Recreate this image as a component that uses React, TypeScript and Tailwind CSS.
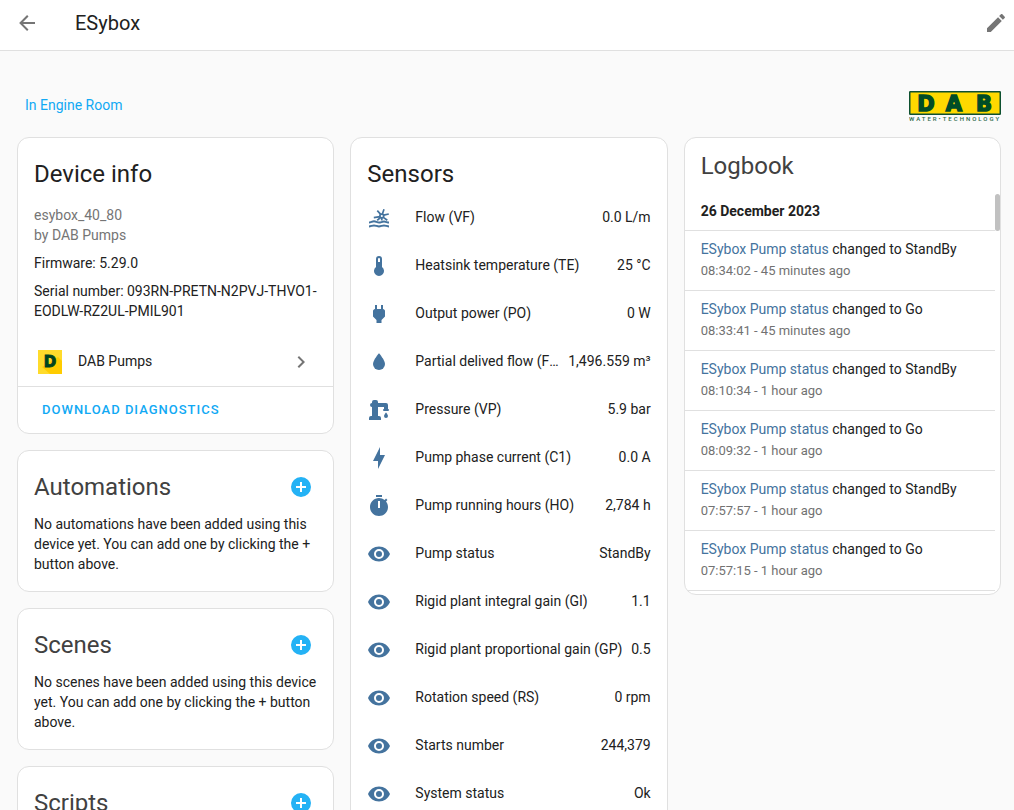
import React from 'react';

const icons = {
  back: 'M20,11V13H8L13.5,18.5L12.08,19.92L4.16,12L12.08,4.08L13.5,5.5L8,11H20Z',
  pencil:
    'M20.71,7.04C21.1,6.65 21.1,6 20.71,5.63L18.37,3.29C18,2.9 17.35,2.9 16.96,3.29L15.12,5.12L18.87,8.87M3,17.25V21H6.75L17.81,9.93L14.06,6.18L3,17.25Z',
  chevron: 'M8.59,16.58L13.17,12L8.59,7.41L10,6L16,12L10,18L8.59,16.58Z',
  plus: 'M17,13H13V17H11V13H7V11H11V7H13V11H17M12,2A10,10 0 0,0 2,12A10,10 0 0,0 12,22A10,10 0 0,0 22,12A10,10 0 0,0 12,2Z',
  thermometer: 'M15 13V5A3 3 0 0 0 9 5V13A5 5 0 1 0 15 13M12 4A1 1 0 0 1 13 5V8H11V5A1 1 0 0 1 12 4Z',
  plug: 'M16,7V3H14V7H10V3H8V7H8C7,7 6,8 6,9V14.5L9.5,18V21H14.5V18L18,14.5V9C18,8 17,7 16,7Z',
  water: 'M12,20A6,6 0 0,1 6,14C6,10 12,3.25 12,3.25C12,3.25 18,10 18,14A6,6 0 0,1 12,20Z',
  pump: 'M19,14.5C19,14.5 21,16.67 21,18A2,2 0 0,1 19,20A2,2 0 0,1 17,18C17,16.67 19,14.5 19,14.5M5,18V9A2,2 0 0,1 3,7A2,2 0 0,1 5,5V4A2,2 0 0,1 7,2H9A2,2 0 0,1 11,4V5H19A2,2 0 0,1 21,7V9L21,11A1,1 0 0,1 22,12A1,1 0 0,1 21,13H17A1,1 0 0,1 16,12A1,1 0 0,1 17,11V9H11V18H12A2,2 0 0,1 14,20V22H2V20A2,2 0 0,1 4,18H5Z',
  bolt: 'M11 15H6L13 1V9H18L11 23V15Z',
  timer:
    'M19.03 7.39L20.45 5.97C20 5.46 19.55 5 19.04 4.56L17.62 6C16.07 4.74 14.12 4 12 4C7.03 4 3 8.03 3 13C3 17.97 7.02 22 12 22C17 22 21 17.97 21 13C21 10.88 20.26 8.93 19.03 7.39M13 14H11V7H13V14M15 1H9V3H15V1Z',
  eye: 'M12,9A3,3 0 0,0 9,12A3,3 0 0,0 12,15A3,3 0 0,0 15,12A3,3 0 0,0 12,9M12,17A5,5 0 0,1 7,12A5,5 0 0,1 12,7A5,5 0 0,1 17,12A5,5 0 0,1 12,17M12,4.5C7,4.5 2.73,7.61 1,12C2.73,16.39 7,19.5 12,19.5C17,19.5 21.27,16.39 23,12C21.27,7.61 17,4.5 12,4.5Z',
};

type IconName = keyof typeof icons | 'hydro';

const sensors: { icon: IconName; name: string; value: string }[] = [
  { icon: 'hydro', name: 'Flow (VF)', value: '0.0 L/m' },
  { icon: 'thermometer', name: 'Heatsink temperature (TE)', value: '25 °C' },
  { icon: 'plug', name: 'Output power (PO)', value: '0 W' },
  { icon: 'water', name: 'Partial delived flow (FP)', value: '1,496.559 m³' },
  { icon: 'pump', name: 'Pressure (VP)', value: '5.9 bar' },
  { icon: 'bolt', name: 'Pump phase current (C1)', value: '0.0 A' },
  { icon: 'timer', name: 'Pump running hours (HO)', value: '2,784 h' },
  { icon: 'eye', name: 'Pump status', value: 'StandBy' },
  { icon: 'eye', name: 'Rigid plant integral gain (GI)', value: '1.1' },
  { icon: 'eye', name: 'Rigid plant proportional gain (GP)', value: '0.5' },
  { icon: 'eye', name: 'Rotation speed (RS)', value: '0 rpm' },
  { icon: 'eye', name: 'Starts number', value: '244,379' },
  { icon: 'eye', name: 'System status', value: 'Ok' },
];

const logbook = [
  { state: 'StandBy', time: '08:34:02 - 45 minutes ago' },
  { state: 'Go', time: '08:33:41 - 45 minutes ago' },
  { state: 'StandBy', time: '08:10:34 - 1 hour ago' },
  { state: 'Go', time: '08:09:32 - 1 hour ago' },
  { state: 'StandBy', time: '07:57:57 - 1 hour ago' },
  { state: 'Go', time: '07:57:15 - 1 hour ago' },
];

function Icon({ name, className = '' }: { name: IconName; className?: string }) {
  if (name === 'hydro') return <HydroIcon className={className} />;
  return (
    <svg viewBox="0 0 24 24" className={`size-6 shrink-0 fill-current ${className}`} aria-hidden="true">
      <path d={icons[name]} />
    </svg>
  );
}

// Turbine wheel above two waves
function HydroIcon({ className = '' }: { className?: string }) {
  return (
    <svg viewBox="0 0 24 24" className={`size-6 shrink-0 fill-none stroke-current ${className}`} aria-hidden="true">
      <circle cx="14.8" cy="10" r="1.9" strokeWidth="1.7" />
      <path
        strokeWidth="1.7"
        d="M13.7 8.3L10.3 4.6M15.4 8L17 3.2M16.6 9.2L21.8 8M16.3 11.4L20.3 14.2M15 12L14.6 14.5M13 10.7L6.8 11.6M13.4 11.5L10.2 14.4"
      />
      <path
        strokeWidth="2"
        d="M2 16.6C3.7 16.6 5.3 15.2 7 15.2S10.3 16.6 12 16.6S15.3 15.6 17 15.6S20.3 16.6 22 16.6M2 20.4C3.7 20.4 5.3 19.4 7 19.4S10.3 20.4 12 20.4S15.3 19.4 17 19.4S20.3 20.4 22 20.4"
      />
    </svg>
  );
}

function BrandLogo() {
  return (
    <svg viewBox="0 0 92 31" className="h-[31px] w-[92px]" role="img" aria-label="DAB Water Technology">
      <rect x="0.75" y="0.75" width="90.5" height="22.5" rx="0.5" fill="#ffd900" stroke="#0d5030" strokeWidth="1.5" />
      <g
        fontSize="21"
        fontWeight="700"
        fill="#004d27"
        stroke="#004d27"
        strokeWidth="1.5"
        textAnchor="middle"
        fontFamily="'DejaVu Sans', sans-serif"
      >
        <text x="17" y="20">
          D
        </text>
        <text x="45" y="20">
          A
        </text>
        <text x="75" y="20">
          B
        </text>
      </g>
      <text x="0" y="30" fontSize="6" fontWeight="500" fill="#2d6b4c" letterSpacing="2" fontFamily="Roboto, sans-serif">
        WATER•TECHNOLOGY
      </text>
    </svg>
  );
}

function BrandIcon() {
  return (
    <svg viewBox="0 0 24 24" className="size-6 shrink-0" aria-hidden="true">
      <path fill="#ffdb2b" d="M0 0H24V24H0Z" />
      <path fill="#ffcc00" d="M20 7L24 11V24H12L4 17Z" />
      <text
        x="12"
        y="17"
        fontSize="15"
        fontWeight="700"
        fill="#004320"
        stroke="#004320"
        textAnchor="middle"
        fontFamily="'DejaVu Sans', sans-serif"
      >
        D
      </text>
    </svg>
  );
}

function Card({ children, className = '' }: { children: React.ReactNode; className?: string }) {
  return (
    <section className={`overflow-hidden rounded-xl border border-[#e0e0e0] bg-white ${className}`}>{children}</section>
  );
}

function EmptyCard({ title, children }: { title: string; children: React.ReactNode }) {
  return (
    <Card className="px-4 pb-[17px]">
      <div className="flex h-[63px] items-center justify-between pt-2 pr-1">
        <h2 className="text-2xl text-[#414141]">{title}</h2>
        <button type="button" aria-label={`Add ${title}`} className="text-[#24b2f5]">
          <Icon name="plus" />
        </button>
      </div>
      <p className="leading-5">{children}</p>
    </Card>
  );
}

export default function App() {
  return (
    <div className="flex h-screen flex-col overflow-hidden bg-[#fafafa] font-[Roboto,sans-serif] text-sm text-[#212121]">
      <header className="flex h-[51px] shrink-0 items-center border-b border-[#e0e0e0] bg-white pr-1.5 pb-1 pl-[15px]">
        <button type="button" aria-label="Back" className="text-[#757575]">
          <Icon name="back" />
        </button>
        <h1 className="ml-9 flex-1 text-xl">ESybox</h1>
        <button type="button" aria-label="Edit" className="text-[#757575]">
          <Icon name="pencil" />
        </button>
      </header>

      <main className="flex-1 overflow-y-auto pr-[13px] pl-[17px] [scrollbar-width:none]">
        <div className="flex h-[86px] items-end justify-between pb-[15px] pl-2">
          <a href="#area" className="pb-[7px] leading-5 text-[#11a9f4]">
            In Engine Room
          </a>
          <BrandLogo />
        </div>

        <div className="grid grid-cols-3 items-start gap-4">
          <div className="flex flex-col gap-4">
            <Card>
              <div className="px-4 pt-5">
                <h2 className="mb-[15px] text-2xl">Device info</h2>
                <div className="flex flex-col gap-2 leading-5">
                  <p className="text-[#757575]">
                    esybox_40_80
                    <br />
                    by DAB Pumps
                  </p>
                  <p>Firmware: 5.29.0</p>
                  <p>Serial number: 093RN-PRETN-N2PVJ-THVO1-EODLW-RZ2UL-PMIL901</p>
                </div>
              </div>
              <a href="#integration" className="mt-[17px] flex h-12 items-center gap-4 px-5">
                <BrandIcon />
                <span className="flex-1 pb-0.5">DAB Pumps</span>
                <Icon name="chevron" className="text-[#757575]" />
              </a>
              <div className="border-t border-[#e0e0e0] px-6 pt-3 pb-[13px]">
                <button type="button" className="text-[13px] leading-5 font-medium tracking-[1px] text-[#11a9f4] uppercase">
                  Download diagnostics
                </button>
              </div>
            </Card>

            <EmptyCard title="Automations">
              No automations have been added using this device yet. You can add one by clicking the + button above.
            </EmptyCard>
            <EmptyCard title="Scenes">
              No scenes have been added using this device yet. You can add one by clicking the + button above.
            </EmptyCard>
            <EmptyCard title="Scripts">
              No scripts have been added using this device yet. You can add one by clicking the + button above.
            </EmptyCard>
          </div>

          <Card className="px-4 pt-5 pb-4">
            <h2 className="text-2xl">Sensors</h2>
            <ul className="mt-1 flex flex-col">
              {sensors.map((s) => (
                <li key={s.name} className="flex h-12 items-center">
                  <Icon name={s.icon} className="text-[#44739e]" />
                  <span className="ml-6 min-w-0 flex-1 truncate pb-0.5">{s.name}</span>
                  <span className="ml-2 pb-0.5 whitespace-nowrap">{s.value}</span>
                </li>
              ))}
            </ul>
          </Card>

          <Card className="relative h-[458px]">
            <h2 className="px-4 pt-3 text-2xl text-[#414141]">Logbook</h2>
            <div className="mr-[5px]">
              <h3 className="px-4 pt-[19px] pb-[9px] leading-5 font-bold">26 December 2023</h3>
              <ul>
                {logbook.map((entry) => (
                  <li key={entry.time} className="h-[60px] border-t border-[#e0e0e0] px-4 pt-2">
                    <p className="leading-5">
                      <a href="#entity" className="text-[#44739e]">
                        ESybox Pump status
                      </a>{' '}
                      changed to {entry.state}
                    </p>
                    <p className="mt-0.5 text-[13px] leading-5 text-[#727272]">{entry.time}</p>
                  </li>
                ))}
              </ul>
              <div className="border-t border-[#e0e0e0]" />
            </div>
            {/* scroll thumb */}
            <div className="absolute top-14 right-0 h-[37px] w-[5px] rounded-sm bg-[#c1c1c1]" />
          </Card>
        </div>
      </main>
    </div>
  );
}
